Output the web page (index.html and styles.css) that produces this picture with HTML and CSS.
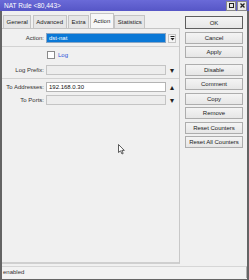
FILE: index.html
```html
<!DOCTYPE html>
<html lang="en">
<head>
<meta charset="UTF-8" />
<title>NAT Rule &lt;80,443&gt;</title>
<link rel="stylesheet" href="styles.css">
</head>
<body>
<div class="window">
  <div class="titlebar">
    <span class="title">NAT Rule &lt;80,443&gt;</span>
    <span class="winbtns">
      <span class="winbtn">
        <svg width="7" height="7" viewBox="0 0 7 7"><rect x="1.5" y="1.5" width="4" height="4" fill="none" stroke="#222" stroke-width="1"/></svg>
      </span>
      <span class="winbtn">
        <svg width="7" height="7" viewBox="0 0 7 7"><path d="M1.5 1.5 L5.5 5.5 M5.5 1.5 L1.5 5.5" stroke="#222" stroke-width="1.3"/></svg>
      </span>
    </span>
  </div>

  <div class="body">
    <div class="main">
      <div class="tabs">
        <div class="tab">General</div>
        <div class="tab">Advanced</div>
        <div class="tab">Extra</div>
        <div class="tab active">Action</div>
        <div class="tab">Statistics</div>
      </div>
      <div class="page">
        <div class="row">
          <label class="lbl">Action:</label>
          <div class="field sel">dst-nat</div>
          <span class="dd box">
            <svg width="5" height="5" viewBox="0 0 5 5"><path d="M0.5 0.5 H4.5" stroke="#222"/><path d="M0.5 2 L4.5 2 L2.5 4.5 Z" fill="#222"/></svg>
          </span>
        </div>
        <div class="sep"></div>
        <div class="row check-row">
          <span class="lbl"></span>
          <span class="checkbox"></span>
          <span class="check-label">Log</span>
        </div>
        <div class="row">
          <label class="lbl">Log Prefix:</label>
          <div class="field off"></div>
          <span class="dd">&#9662;</span>
        </div>
        <div class="sep"></div>
        <div class="row">
          <label class="lbl">To Addresses:</label>
          <div class="field">192.168.0.30</div>
          <span class="dd">&#9652;</span>
        </div>
        <div class="row">
          <label class="lbl">To Ports:</label>
          <div class="field off"></div>
          <span class="dd">&#9662;</span>
        </div>
        <svg class="cursor" width="7" height="11" viewBox="0 0 7 11"><path d="M0.5 0.5 L0.5 8.5 L2.5 6.8 L4 10 L5.2 9.4 L3.8 6.4 L6.3 6.4 Z" fill="#fff" stroke="#333" stroke-width="0.8"/></svg>
      </div>
    </div>
    <div class="side">
      <button class="btn default">OK</button>
      <button class="btn">Cancel</button>
      <button class="btn">Apply</button>
      <button class="btn group">Disable</button>
      <button class="btn">Comment</button>
      <button class="btn">Copy</button>
      <button class="btn">Remove</button>
      <button class="btn">Reset Counters</button>
      <button class="btn">Reset All Counters</button>
    </div>
  </div>

  <div class="status">
    <div class="status-field">enabled</div>
  </div>
</div>
</body>
</html>
```

FILE: styles.css
```css
html, body {
  margin: 0;
  padding: 0;
}
body {
  font-family: "Liberation Sans", Arial, sans-serif;
  font-size: 6px;
  color: #1a1a1a;
  background: #f0f0f0;
  white-space: nowrap;
}
.window {
  width: 249px;
  height: 280px;
  box-sizing: border-box;
  border-left: 2px solid #646464;
  border-right: 2px solid #646464;
  border-bottom: 1px solid #646464;
  background: #f0f0f0;
  display: flex;
  flex-direction: column;
}
.titlebar {
  height: 11px;
  margin: 0 -2px;
  background: linear-gradient(#6a6ad8, #5656c6);
  color: #fff;
  display: flex;
  align-items: center;
  justify-content: space-between;
  padding: 0 2px 0 4px;
  font-size: 6.5px;
}
.title {
  line-height: 11px;
}
.winbtns {
  display: flex;
  gap: 1px;
}
.winbtn {
  width: 8px;
  height: 8px;
  background: #e8e8e8;
  border: 0.5px solid #888;
  display: flex;
  align-items: center;
  justify-content: center;
}
.body {
  display: flex;
  flex: 1;
}
.main {
  width: 178px;
  display: flex;
  flex-direction: column;
}
.tabs {
  height: 17px;
  display: flex;
  align-items: flex-end;
  padding-left: 1px;
}
.tab {
  height: 13px;
  line-height: 12px;
  padding: 0 2.5px;
  margin-right: 1.5px;
  background: #e6e6e6;
  border: 1px solid #c4c4c4;
  border-bottom: none;
  box-sizing: border-box;
}
.tab.active {
  height: 15px;
  line-height: 14px;
  padding: 0 3px;
  background: #f7f7f7;
  margin-right: 0;
  margin-left: -1px;
}
.page {
  flex: 1;
  position: relative;
  border-top: 1px solid #c4c4c4;
  border-right: 1px solid #c8c8c8;
  border-bottom: 2px solid #cfcfcf;
  padding-top: 4px;
}
.row {
  display: flex;
  align-items: center;
  height: 10px;
  margin-bottom: 3px;
}
.lbl {
  width: 42px;
  text-align: right;
  padding-right: 2px;
  flex: none;
  color: #333;
}
.field {
  width: 120px;
  height: 10px;
  box-sizing: border-box;
  border: 1px solid #b4b4b4;
  background: #fff;
  line-height: 8px;
  padding-left: 2px;
  color: #111;
}
.field.off {
  background: #ededed;
  border-color: #c4c4c4;
}
.field.sel {
  background: #0a78d6;
  color: #fff;
  border-color: #8aa6c4;
}
.dd {
  width: 8px;
  height: 9px;
  margin-left: 2px;
  font-size: 8px;
  line-height: 9px;
  text-align: center;
  color: #222;
  box-sizing: border-box;
}
.dd.box {
  display: flex;
  align-items: center;
  justify-content: center;
  border: 1px solid #c4c4c4;
  background: #f4f4f4;
}
.sep {
  height: 1px;
  background: #d2d2d2;
  margin: 2px 0 3px 0;
}
.check-row {
  margin-top: 1px;
  margin-bottom: 5px;
}
.checkbox {
  width: 6px;
  height: 6px;
  border: 1px solid #8a8a8a;
  background: #fff;
  margin-right: 3px;
  margin-left: 1px;
}
.check-label {
  color: #2a4fd8;
}
.cursor {
  position: absolute;
  left: 116px;
  top: 115px;
}
.side {
  flex: 1;
  display: flex;
  flex-direction: column;
  padding: 5px 2px 0 5px;
  gap: 2.5px;
}
.btn {
  height: 12px;
  width: 58px;
  padding: 0;
  font-family: inherit;
  font-size: 6px;
  color: #1a1a1a;
  background: linear-gradient(#f4f4f4, #e6e6e6);
  border: 1px solid #adadad;
  border-radius: 0;
  box-sizing: border-box;
  white-space: nowrap;
}
.btn.default {
  height: 13px;
  border-color: #5e5e5e;
}
.btn.group {
  margin-top: 3px;
}
.status {
  height: 15px;
  padding: 2px 0 1px 0;
  box-sizing: border-box;
}
.status-field {
  height: 11px;
  line-height: 11px;
  border-top: 1px solid #d6d6d6;
  border-right: 1px solid #b0b0b0;
  padding-left: 1px;
  color: #333;
  background: #f2f2f2;
}
```
